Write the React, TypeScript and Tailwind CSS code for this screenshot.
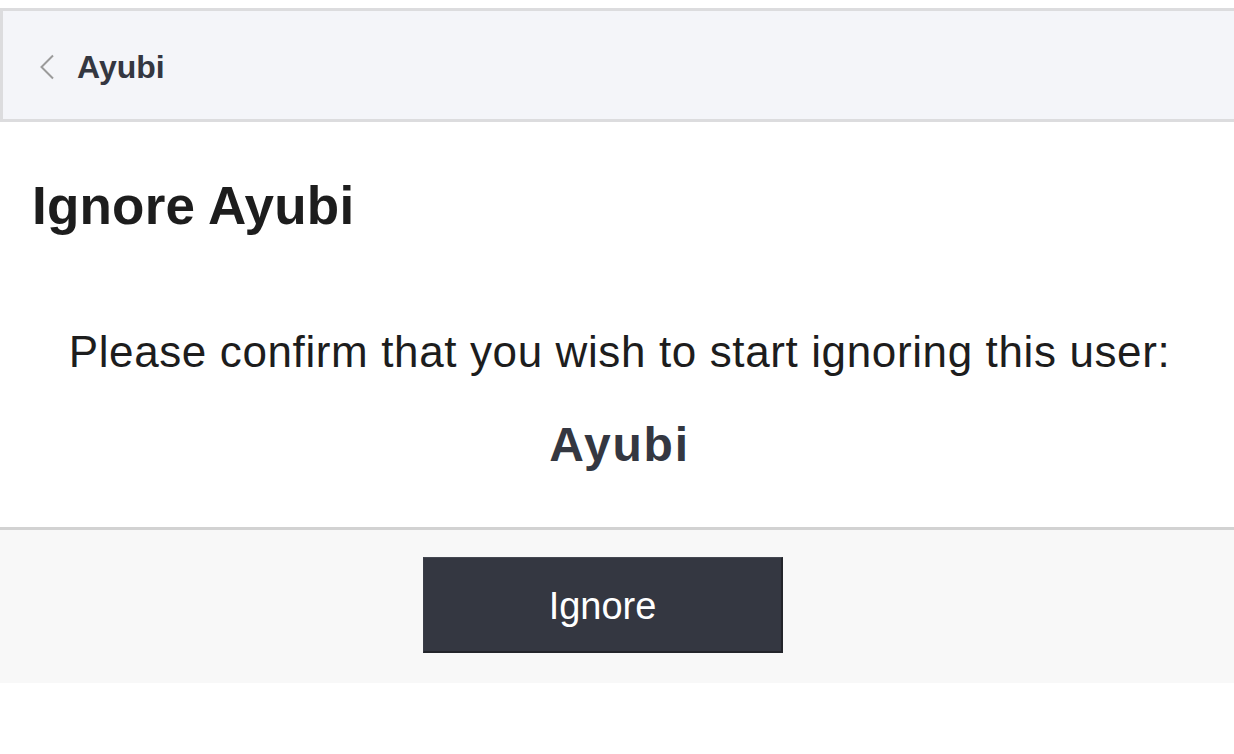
export default function App() {
  return (
    <div
      className="min-h-[754px] bg-white pt-2 text-[#1d1d1d]"
      style={{ fontFamily: '"Liberation Sans", Arial, sans-serif' }}
    >
      {/* top bar */}
      <div className="flex h-[114px] items-center border-y-[3px] border-l-[3px] border-[#dcdcde] bg-[#f4f5f9] pt-[4px] pl-[36px]">
        <svg width="16" height="26" viewBox="0 0 16 26" className="shrink-0">
          <path d="M14 1.5 L2.5 13 L14 24.5" fill="none" stroke="#9b9b9b" strokeWidth="2" />
        </svg>
        <span className="ml-[22px] text-[32px] font-bold text-[#343741]">Ayubi</span>
      </div>

      <h1 className="mt-[52px] pl-[32px] text-[53px] leading-[1.2] font-bold tracking-[0.2px]">Ignore Ayubi</h1>

      <div className="mt-[88px] pl-[5px] text-center">
        <p className="text-[44px] leading-[1.2] tracking-[0.62px]">
          Please confirm that you wish to start ignoring this user:
        </p>
        <p className="mt-[38px] text-[48px] leading-[1.2] font-bold tracking-[1.8px] text-[#343741]">Ayubi</p>
      </div>

      {/* footer with button */}
      <div className="mt-[53px] border-t-[3px] border-[#d2d2d2] bg-[#f8f8f8] pt-[27px] pb-[30px]">
        <div className="flex justify-center pr-[28px]">
          <button className="flex h-[96px] w-[360px] items-center justify-center border-t border-r-2 border-b-2 border-l border-t-[#454852] border-r-[#23252b] border-b-[#23252b] border-l-[#3a3d47] bg-[#343741] pt-[4px] text-[38px] text-white">
            Ignore
          </button>
        </div>
      </div>
    </div>
  );
}
